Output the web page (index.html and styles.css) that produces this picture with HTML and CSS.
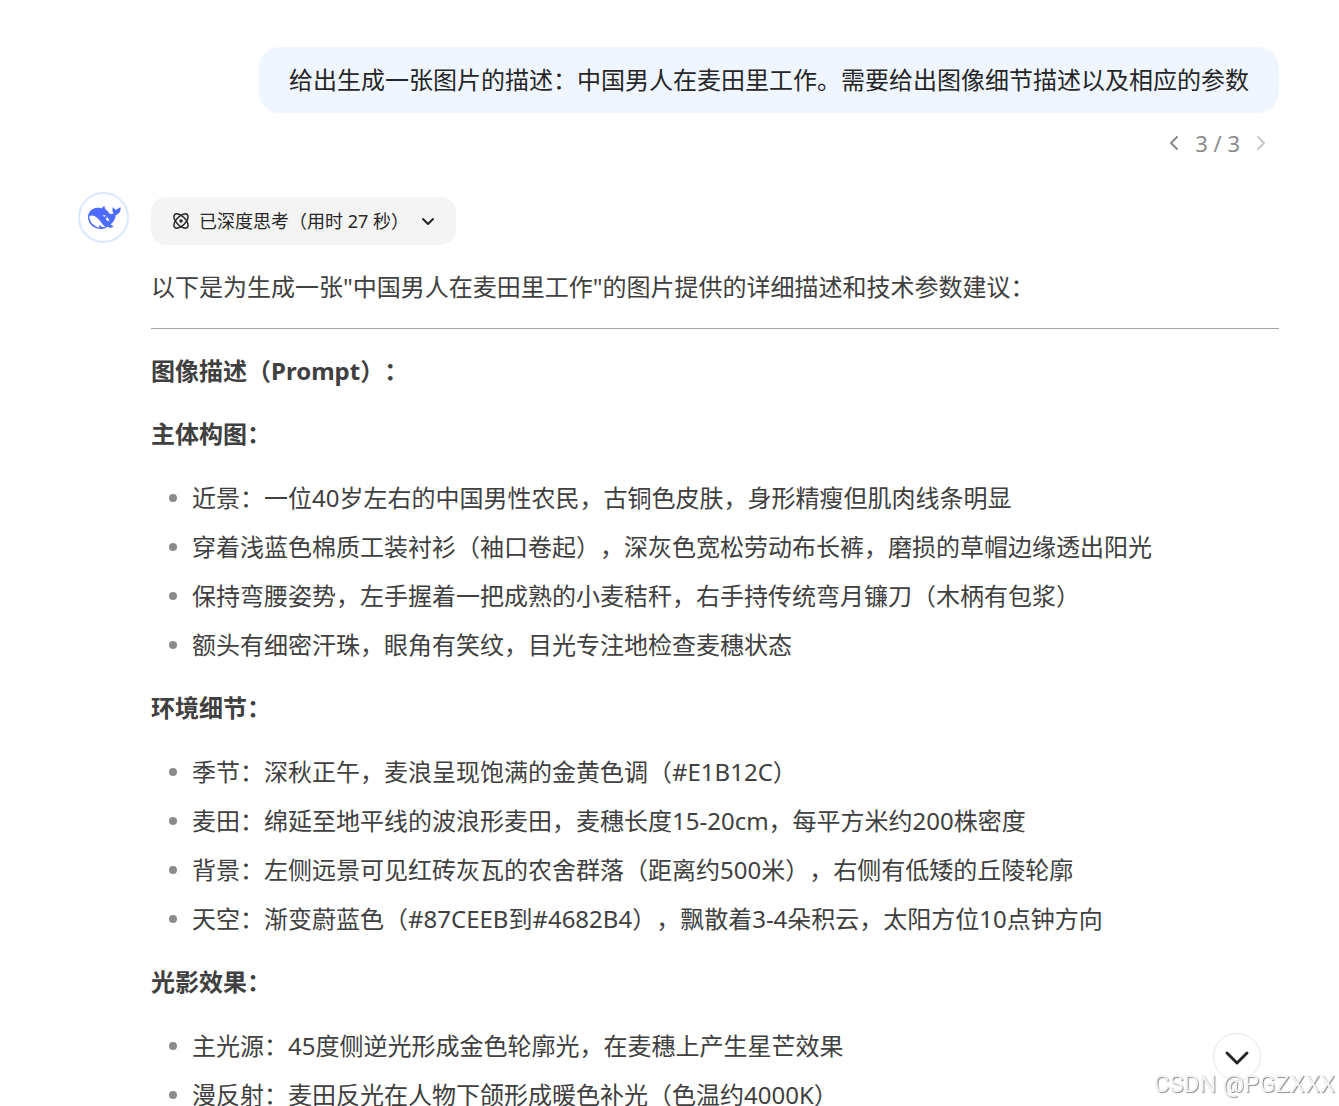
FILE: index.html
```html
<!DOCTYPE html>
<html lang="zh-CN">
<head>
    <meta charset="UTF-8">
    <meta name="viewport" content="width=device-width, initial-scale=1.0">
    <title>DeepSeek</title>
    <link rel="stylesheet" href="styles.css">
</head>
<body>

    <main class="chat">
        <section class="question">
            <p class="bubble">给出生成一张图片的描述：中国男人在麦田里工作。需要给出图像细节描述以及相应的参数</p>
            <div class="pager">
                <button type="button" class="pager-button" aria-label="上一条">
                    <svg width="12" height="18" viewBox="0 0 12 18"><path d="M9 3L3 9l6 6"/></svg>
                </button>
                <span>3 / 3</span>
                <button type="button" class="pager-button" aria-label="下一条" disabled>
                    <svg width="12" height="18" viewBox="0 0 12 18"><path d="M3 3l6 6-6 6"/></svg>
                </button>
            </div>
        </section>

        <section class="answer">
            <div class="avatar">
                <svg width="36" height="30" viewBox="30 40 108 90">
                    <path class="whale" d="M36 82c0-16 12-27 29-28 6 0 10 1 13 2 1-4 4-6 9-6-2 4-1 7 3 10 5 4 9 8 11 12 4 1 8 1 12-1-4-4-5-11-2-19 3 4 5 7 9 8 4-1 8-5 14-7 1 11-4 20-15 24-1 11-6 20-15 27 2 3 5 5 9 6-4 5-12 5-19 1-5 4-11 7-19 7-22 0-39-16-39-36z"/>
                    <path class="belly" d="M40 80c7-6 19 0 28 9 8 8 10 17 20 22-6 4-12 1-16-5-3 0-3 3-1 8-15-2-31-15-31-34z"/>
                    <path class="belly" d="M81 76c8-1 17 8 19 18-7 2-10-4-13-9-2-3-4-5-6-9z"/>
                    <circle class="whale" cx="89" cy="83" r="4"/>
                    <path class="belly" d="M97 51c1 5 3 9 7 12l-3 4c-5-5-7-10-4-16z"/>
                </svg>
            </div>
            <div class="content">
                <button type="button" class="thinking">
                    <svg class="atom" width="18" height="18" viewBox="0 0 36 36">
                        <ellipse cx="18" cy="18" rx="18" ry="9" transform="rotate(45 18 18)"/>
                        <ellipse cx="18" cy="18" rx="18" ry="9" transform="rotate(-45 18 18)"/>
                        <circle cx="18" cy="18" r="2"/>
                    </svg>
                    <span>已深度思考（用时 27 秒）</span>
                    <svg class="arrow" width="14" height="12" viewBox="0 0 14 12"><path d="M2 4l5 5 5-5"/></svg>
                </button>

                <p>以下是为生成一张"中国男人在麦田里工作"的图片提供的详细描述和技术参数建议：</p>
                <hr>
                <h3>图像描述（Prompt）：</h3>

                <h4>主体构图：</h4>
                <ul>
                    <li>近景：一位40岁左右的中国男性农民，古铜色皮肤，身形精瘦但肌肉线条明显</li>
                    <li>穿着浅蓝色棉质工装衬衫（袖口卷起），深灰色宽松劳动布长裤，磨损的草帽边缘透出阳光</li>
                    <li>保持弯腰姿势，左手握着一把成熟的小麦秸秆，右手持传统弯月镰刀（木柄有包浆）</li>
                    <li>额头有细密汗珠，眼角有笑纹，目光专注地检查麦穗状态</li>
                </ul>

                <h4>环境细节：</h4>
                <ul>
                    <li>季节：深秋正午，麦浪呈现饱满的金黄色调（#E1B12C）</li>
                    <li>麦田：绵延至地平线的波浪形麦田，麦穗长度15-20cm，每平方米约200株密度</li>
                    <li>背景：左侧远景可见红砖灰瓦的农舍群落（距离约500米），右侧有低矮的丘陵轮廓</li>
                    <li>天空：渐变蔚蓝色（#87CEEB到#4682B4），飘散着3-4朵积云，太阳方位10点钟方向</li>
                </ul>

                <h4>光影效果：</h4>
                <ul>
                    <li>主光源：45度侧逆光形成金色轮廓光，在麦穗上产生星芒效果</li>
                    <li>漫反射：麦田反光在人物下颌形成暖色补光（色温约4000K）</li>
                </ul>
            </div>
        </section>
    </main>

    <button type="button" class="scroll-down" aria-label="回到底部">
        <svg width="24" height="14" viewBox="0 0 24 14"><path d="M2 3l10 10L22 3"/></svg>
    </button>
    <div class="watermark">CSDN @PGZXXX</div>

</body>
</html>
```
FILE: styles.css
```css
* {
    box-sizing: border-box;
}

body {
    height: 100vh;
    margin: 0;
    overflow: hidden;
    background-color: #fff;
    color: #404040;
    font-family: "Noto Sans", "Noto Sans CJK SC", sans-serif;
    font-size: 24px;
    line-height: 42px;
    text-spacing-trim: space-all;
}

button {
    padding: 0;
    border: none;
    background: none;
    color: inherit;
    font: inherit;
    cursor: pointer;
}

svg {
    display: block;
    flex: none;
    overflow: visible;
}

svg path {
    fill: none;
    stroke: currentColor;
    stroke-width: 2;
    stroke-linecap: round;
    stroke-linejoin: round;
}

.chat {
    padding: 47px 60px 0 78px;
}

.question {
    display: flex;
    flex-direction: column;
    align-items: flex-end;
}

.bubble {
    margin: 0;
    padding: 12px 30px;
    border-radius: 21px;
    background-color: #eff6ff;
    color: #262626;
}

.pager {
    display: flex;
    align-items: center;
    gap: 15px;
    margin-top: 12px;
    padding-right: 12px;
    color: #8b8b8b;
    font-size: 22px;
    line-height: 36px;
}

.pager-button:disabled {
    color: #c8c8c8;
}

.answer {
    display: flex;
    align-items: flex-start;
    gap: 22px;
    margin-top: 36px;
}

.avatar {
    display: flex;
    flex: none;
    align-items: center;
    justify-content: center;
    width: 51px;
    height: 51px;
    margin-top: -5px;
    border: 2px solid #dbe8ff;
    border-radius: 50%;
}

.avatar .whale {
    fill: #4d6bfe;
    stroke: none;
}

.avatar .belly {
    fill: #fff;
    stroke: none;
}

.content {
    flex: 1;
}

.thinking {
    display: flex;
    align-items: center;
    gap: 9px;
    height: 48px;
    padding: 0 21px;
    border-radius: 15px;
    background-color: #f4f4f4;
    color: #262626;
    font-size: 18px;
}

.atom {
    fill: none;
    stroke: currentColor;
    stroke-width: 3;
}

.arrow {
    margin-left: 3px;
}

.content p,
.content h3,
.content h4 {
    margin: 21px 0;
    font-size: 24px;
}

.content p {
    margin-bottom: 20px;
}

.content hr {
    height: 1px;
    margin: 20px 0 21px;
    border: none;
    background-color: #a3a3a3;
}

.content ul {
    margin: 22px 0 21px;
    padding-left: 41px;
    list-style: none;
}

.content li {
    position: relative;
}

.content li + li {
    margin-top: 7px;
}

.content li::before {
    content: "";
    position: absolute;
    top: 17px;
    left: -23px;
    width: 8px;
    height: 8px;
    border-radius: 50%;
    background-color: #8b8b8b;
}

.scroll-down {
    position: fixed;
    right: 78px;
    bottom: 25px;
    display: flex;
    align-items: center;
    justify-content: center;
    width: 48px;
    height: 48px;
    border: 1px solid #e5e5e5;
    border-radius: 50%;
    background-color: #fff;
    color: #262626;
}

.scroll-down path {
    stroke-width: 3;
}

.watermark {
    position: fixed;
    right: 4px;
    bottom: 6px;
    color: #f4f4f4;
    font-family: Roboto, "Liberation Sans", sans-serif;
    font-size: 24px;
    line-height: 32px;
    text-shadow: 1px 1px 1px #909090;
}
```
